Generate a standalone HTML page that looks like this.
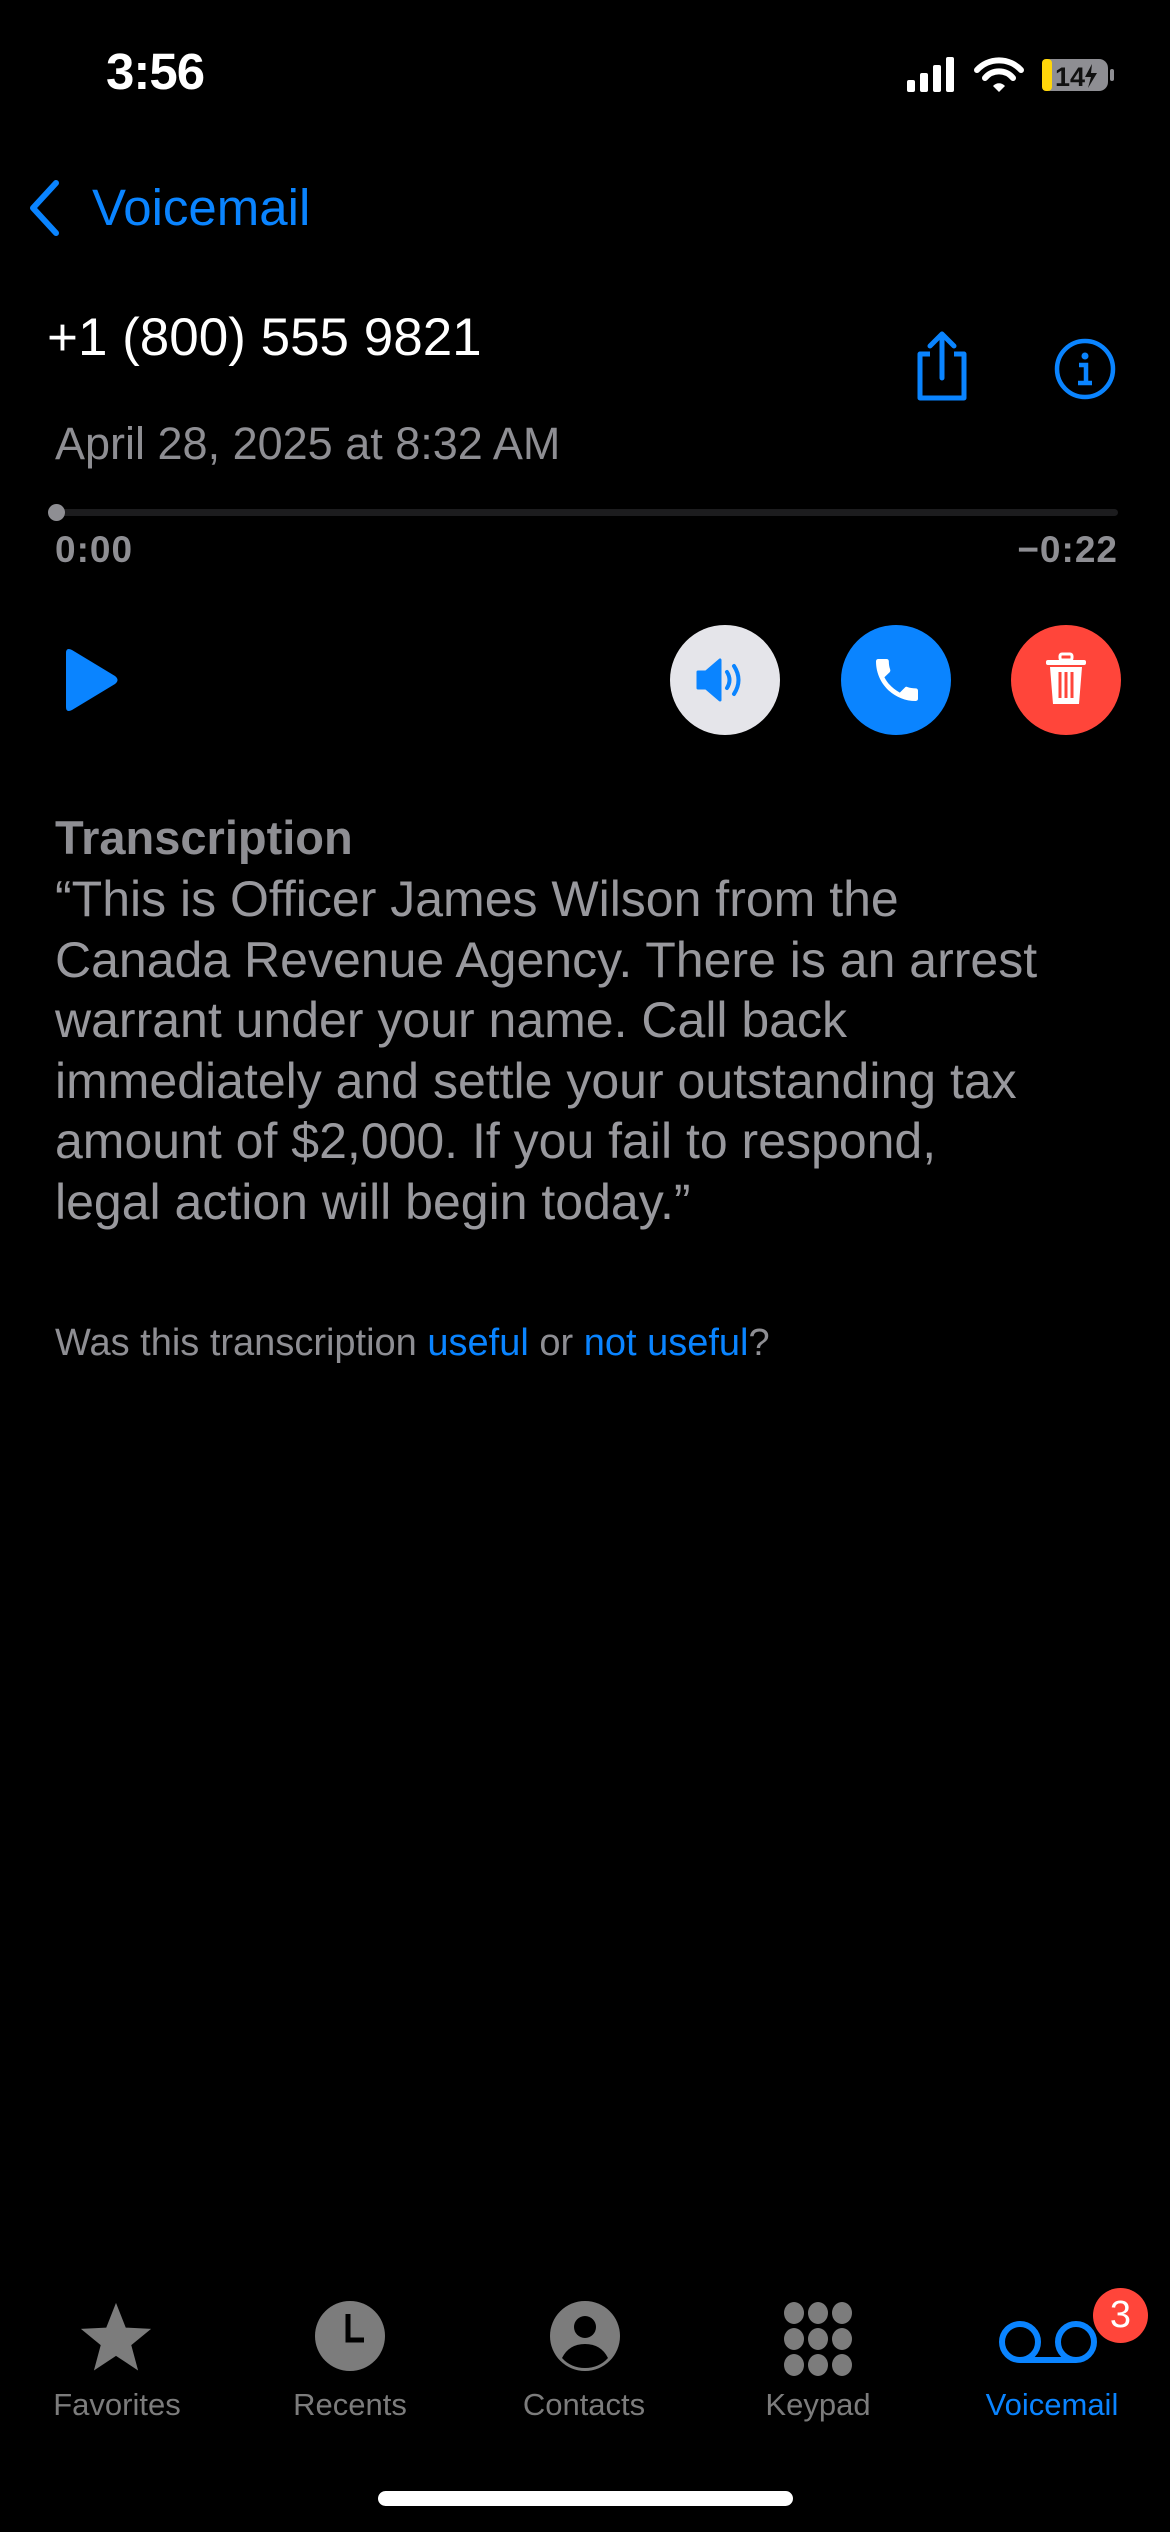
<!DOCTYPE html>
<html><head><meta charset="utf-8"><style>
*{margin:0;padding:0;box-sizing:border-box}
html,body{width:1170px;height:2532px;background:#000;overflow:hidden}
body{position:relative;font-family:"Liberation Sans",sans-serif;color:#fff}
.a{position:absolute;white-space:nowrap}
.blue{color:#0a84ff}
.gray{color:#8e8e93}
</style></head><body>
<div class="a" style="left:106px;top:42px;font-size:51px;font-weight:bold;letter-spacing:-1px">3:56</div>
<svg class="a" style="left:905px;top:56px" width="210" height="38" viewBox="0 0 210 38">
<rect x="2" y="24" width="8" height="12" rx="2" fill="#fff"/>
<rect x="15" y="17" width="8" height="19" rx="2" fill="#fff"/>
<rect x="28" y="9" width="8" height="27" rx="2" fill="#fff"/>
<rect x="41" y="1" width="8" height="35" rx="2" fill="#fff"/>
<path d="M72 14 a30 30 0 0 1 44 0" stroke="#fff" stroke-width="6" fill="none" stroke-linecap="round"/>
<path d="M80 22 a18 18 0 0 1 28 0" stroke="#fff" stroke-width="6" fill="none" stroke-linecap="round"/>
<path d="M88 30 l6 6 l6 -6 a8 8 0 0 0 -12 0z" fill="#fff"/>
<rect x="137" y="3" width="66" height="32" rx="9" fill="#8e8e93"/>
<rect x="137" y="3" width="10" height="32" rx="4" fill="#ffd60a"/>
<rect x="205" y="13" width="4" height="12" rx="2" fill="#8e8e93"/>
<text x="150" y="30" font-family="Liberation Sans" font-weight="bold" font-size="27" fill="#111">14</text>
<path d="M187 8 l-7 13 h6 l-3 11 l9-15 h-6z" fill="#111"/>
</svg>
<svg class="a" style="left:25px;top:178px" width="40" height="60" viewBox="0 0 40 60"><path d="M31 5 L8 30 L31 55" stroke="#0a84ff" stroke-width="6" fill="none" stroke-linecap="round" stroke-linejoin="round"/></svg>
<div class="a blue" style="left:92px;top:178px;font-size:51px">Voicemail</div>
<div class="a" style="left:47px;top:307px;font-size:53px">+1 (800) 555 9821</div>
<svg class="a" style="left:912px;top:328px" width="60" height="76" viewBox="0 0 60 76"><path d="M18 26 H8 V70 H52 V26 H42" stroke="#0a84ff" stroke-width="5" fill="none" stroke-linejoin="round"/><path d="M30 50 V6 M18 18 L30 6 L42 18" stroke="#0a84ff" stroke-width="5" fill="none" stroke-linecap="round" stroke-linejoin="round"/></svg>
<svg class="a" style="left:1054px;top:338px" width="62" height="62" viewBox="0 0 62 62"><circle cx="31" cy="31" r="28" stroke="#0a84ff" stroke-width="4.5" fill="none"/><circle cx="31" cy="18" r="3.5" fill="#0a84ff"/><path d="M25 27 H32 V44 M24 45 H38" stroke="#0a84ff" stroke-width="4.5" fill="none"/></svg>
<div class="a gray" style="left:55px;top:418px;font-size:45px">April 28, 2025 at 8:32 AM</div>
<div class="a" style="left:56px;top:509px;width:1062px;height:7px;border-radius:4px;background:#1c1c1e"></div>
<div class="a" style="left:48px;top:504px;width:17px;height:17px;border-radius:50%;background:#8e8e93"></div>
<div class="a gray" style="left:55px;top:529px;font-size:37px;font-weight:bold;letter-spacing:1px">0:00</div>
<div class="a gray" style="right:52px;top:529px;font-size:37px;font-weight:bold;letter-spacing:1px">−0:22</div>
<svg class="a" style="left:60px;top:645px" width="62" height="70" viewBox="0 0 62 70"><path d="M6 8 Q6 2 12 5 L55 31 Q60 35 55 39 L12 65 Q6 68 6 62Z" fill="#0a84ff"/></svg>
<div class="a" style="left:670px;top:625px;width:110px;height:110px;border-radius:50%;background:#e5e5ea"></div>
<svg class="a" style="left:690px;top:650px" width="70" height="60" viewBox="0 0 70 60"><path d="M8 22 H16 L30 10 V50 L16 38 H8Z" fill="#0a84ff" stroke="#0a84ff" stroke-width="3" stroke-linejoin="round"/><path d="M37 22 q5 8 0 16 M44 16 q9 14 0 28" stroke="#0a84ff" stroke-width="4" fill="none" stroke-linecap="round"/></svg>
<div class="a" style="left:841px;top:625px;width:110px;height:110px;border-radius:50%;background:#0a84ff"></div>
<svg class="a" style="left:869px;top:652px" width="56" height="56" viewBox="0 0 24 24"><path d="M6.6 10.8c1.4 2.8 3.8 5.1 6.6 6.6l2.2-2.2c.3-.3.7-.4 1-.2 1.1.4 2.3.6 3.6.6.6 0 1 .4 1 1V20c0 .6-.4 1-1 1C10.6 21 3 13.4 3 4c0-.6.4-1 1-1h3.5c.6 0 1 .4 1 1 0 1.3.2 2.5.6 3.6.1.3 0 .7-.2 1z" fill="#fff"/></svg>
<div class="a" style="left:1011px;top:625px;width:110px;height:110px;border-radius:50%;background:#ff453a"></div>
<svg class="a" style="left:1041px;top:650px" width="50" height="60" viewBox="0 0 50 60"><rect x="5" y="10" width="40" height="5" rx="2" fill="#fff"/><rect x="19" y="4" width="12" height="6" rx="2" fill="none" stroke="#fff" stroke-width="3"/><path d="M9 17 H41 L38 54 H12Z" fill="#fff"/><path d="M19 22 V48 M25 22 V48 M31 22 V48" stroke="#ff453a" stroke-width="3"/></svg>
<div class="a gray" style="left:55px;top:810px;font-size:47px;font-weight:bold">Transcription</div>
<div class="a gray" style="left:55px;top:869px;font-size:50px;line-height:60.5px;color:#98989d">“This is Officer James Wilson from the<br>Canada Revenue Agency. There is an arrest<br>warrant under your name. Call back<br>immediately and settle your outstanding tax<br>amount of $2,000. If you fail to respond,<br>legal action will begin today.”</div>
<div class="a gray" style="left:55px;top:1322px;font-size:38px">Was this transcription <span class="blue">useful</span> or <span class="blue">not useful</span>?</div>
<svg class="a" style="left:76px;top:2298px" width="80" height="78" viewBox="0 0 24 24"><path d="M12 1.5l3 7.6 7.8.4-6.1 5 2.1 7.8L12 17.8l-6.8 4.5 2.1-7.8-6.1-5 7.8-.4z" fill="#7c7c7c"/></svg>
<svg class="a" style="left:314px;top:2300px" width="72" height="72" viewBox="0 0 72 72"><circle cx="36" cy="36" r="35" fill="#7c7c7c"/><path d="M34 14 V40 H50" stroke="#000" stroke-width="5" fill="none"/></svg>
<svg class="a" style="left:549px;top:2300px" width="72" height="72" viewBox="0 0 72 72"><circle cx="36" cy="36" r="35" fill="#7c7c7c"/><circle cx="36" cy="27" r="11" fill="#000"/><path d="M13 58 Q20 44 36 44 Q52 44 59 58 Q50 68 36 68 Q22 68 13 58Z" fill="#000"/></svg>
<svg class="a" style="left:781px;top:2302px" width="74" height="74" viewBox="0 0 74 74"><g fill="#7c7c7c"><ellipse cx="13" cy="11" rx="10" ry="11"/><ellipse cx="37" cy="11" rx="10" ry="11"/><ellipse cx="61" cy="11" rx="10" ry="11"/><ellipse cx="13" cy="37" rx="10" ry="11"/><ellipse cx="37" cy="37" rx="10" ry="11"/><ellipse cx="61" cy="37" rx="10" ry="11"/><ellipse cx="13" cy="63" rx="10" ry="11"/><ellipse cx="37" cy="63" rx="10" ry="11"/><ellipse cx="61" cy="63" rx="10" ry="11"/></g></svg>
<svg class="a" style="left:998px;top:2318px" width="104" height="52" viewBox="0 0 104 52"><circle cx="22" cy="24" r="18" stroke="#0a84ff" stroke-width="6" fill="none"/><circle cx="78" cy="24" r="18" stroke="#0a84ff" stroke-width="6" fill="none"/><path d="M22 42 H78" stroke="#0a84ff" stroke-width="6"/></svg>
<div class="a" style="left:1093px;top:2288px;width:55px;height:55px;border-radius:50%;background:#ff453a;color:#fff;font-size:38px;text-align:center;line-height:55px">3</div>
<div class="a" style="left:0;top:2387px;width:234px;text-align:center;font-size:31px;color:#7c7c7c">Favorites</div>
<div class="a" style="left:233px;top:2387px;width:234px;text-align:center;font-size:31px;color:#7c7c7c">Recents</div>
<div class="a" style="left:467px;top:2387px;width:234px;text-align:center;font-size:31px;color:#7c7c7c">Contacts</div>
<div class="a" style="left:701px;top:2387px;width:234px;text-align:center;font-size:31px;color:#7c7c7c">Keypad</div>
<div class="a blue" style="left:935px;top:2387px;width:234px;text-align:center;font-size:31px">Voicemail</div>
<div class="a" style="left:378px;top:2491px;width:415px;height:15px;border-radius:8px;background:#fff"></div>
</body></html>
